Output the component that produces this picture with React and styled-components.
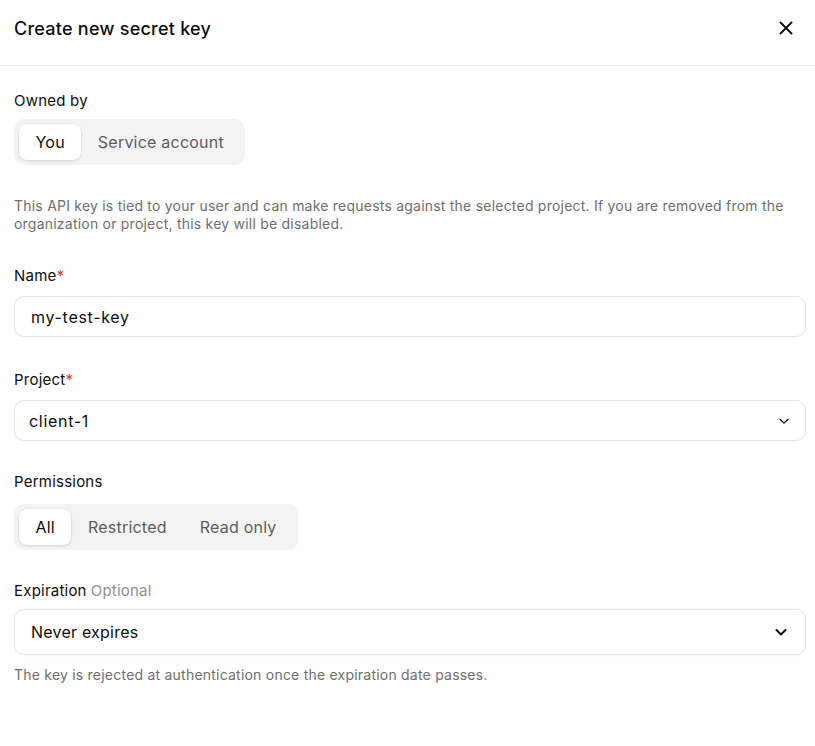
import React from "react";
import styled, { createGlobalStyle } from "styled-components";

const Global = createGlobalStyle`
  body {
    margin: 0;
    background: #fff;
    font-family: Inter, "Noto Sans", sans-serif;
    color: #0d0d0d;
    letter-spacing: 0.22px;
  }
`;

const Dialog = styled.div`
  width: 815px;
  display: flex;
  flex-direction: column;
`;

const Header = styled.div`
  height: 66px;
  box-sizing: border-box;
  display: flex;
  align-items: center;
  justify-content: space-between;
  padding: 0 20px 9px 14px;
  border-bottom: 1px solid #e6e6e6;
`;

const Title = styled.h2`
  margin: 0;
  font-size: 18px;
  font-weight: 500;
  letter-spacing: 0.25px;
`;

const CloseButton = styled.button`
  border: 0;
  background: none;
  padding: 0;
  display: flex;
  cursor: pointer;
  color: #0d0d0d;
`;

const Body = styled.div`
  padding: 25px 9px 0 14px;
  display: flex;
  flex-direction: column;
`;

const Field = styled.div`
  display: flex;
  flex-direction: column;
  margin-top: ${(p) => p.$mt || 0}px;
  margin-bottom: ${(p) => p.$mb || 0}px;
`;

const Label = styled.div`
  font-size: 15px;
  line-height: 20px;
  margin-bottom: ${(p) => p.$gap || 10}px;
`;

const Required = styled.span`
  color: #e02e2a;
`;

const Muted = styled.span`
  color: #8f8f8f;
  margin-left: 4px;
`;

const Segmented = styled.div`
  display: inline-flex;
  align-self: flex-start;
  background: #f3f3f3;
  border-radius: 10px;
  padding: 5px;
  height: 46px;
  box-sizing: border-box;
`;

const Segment = styled.button`
  border: 0;
  font-family: inherit;
  letter-spacing: inherit;
  font-size: 16px;
  padding: 0 16.5px;
  height: 36px;
  border-radius: 8px;
  cursor: pointer;
  background: ${(p) => (p.$active ? "#fff" : "transparent")};
  color: ${(p) => (p.$active ? "#0d0d0d" : "#5d5d5d")};
  box-shadow: ${(p) =>
    p.$active ? "0 1px 3px rgba(0,0,0,0.12), 0 0 0 0.5px rgba(0,0,0,0.04)" : "none"};
`;

const Help = styled.p`
  margin: ${(p) => p.$mt || 0}px 0 0;
  font-size: 14px;
  line-height: 18px;
  color: #6e6e6e;
`;

const Box = styled.div`
  height: ${(p) => p.$h || 41}px;
  box-sizing: border-box;
  border: 1px solid #e3e3e3;
  border-radius: 10px;
  display: flex;
  align-items: center;
  justify-content: space-between;
  padding: 0 ${(p) => p.$pr || 14}px 0 ${(p) => p.$pl || 14}px;
  font-size: 16px;
  box-shadow: 0 1px 2px rgba(0, 0, 0, 0.03);
`;

const Value = styled.span`
  letter-spacing: ${(p) => (p.$spaced ? "0.7px" : "inherit")};
`;

const Chevron = ({ size = 14, weight = 1.6 }) => (
  <svg width={size} height={size} viewBox="0 0 16 16" fill="none">
    <path d="M3.5 6l4.5 4.5L12.5 6" stroke="#0d0d0d" strokeWidth={weight} strokeLinecap="round" strokeLinejoin="round" />
  </svg>
);

export default function App() {
  return (
    <>
      <Global />
      <Dialog>
        <Header>
          <Title>Create new secret key</Title>
          <CloseButton aria-label="Close">
            <svg width="18" height="18" viewBox="0 0 18 18" fill="none">
              <path d="M3.5 3.5l11 11M14.5 3.5l-11 11" stroke="#0d0d0d" strokeWidth="1.9" strokeLinecap="round" />
            </svg>
          </CloseButton>
        </Header>
        <Body>
          <Field>
            <Label $gap={8}>Owned by</Label>
            <Segmented>
              <Segment $active>You</Segment>
              <Segment>Service account</Segment>
            </Segmented>
          </Field>
          <Help $mt={32}>
            This API key is tied to your user and can make requests against the selected project. If you are removed from the organization or project, this key will be disabled.
          </Help>

          <Field $mt={33} $mb={33}>
            <Label>
              Name<Required>*</Required>
            </Label>
            <Box $pl={16}>
              <Value $spaced>my-test-key</Value>
            </Box>
          </Field>

          <Field $mb={31}>
            <Label>
              Project<Required>*</Required>
            </Label>
            <Box $pr={14}>
              <Value $spaced>client-1</Value>
              <Chevron size={14} weight={1.4} />
            </Box>
          </Field>

          <Field $mb={31}>
            <Label $gap={12}>Permissions</Label>
            <Segmented>
              <Segment $active>All</Segment>
              <Segment>Restricted</Segment>
              <Segment>Read only</Segment>
            </Segmented>
          </Field>

          <Field>
            <Label $gap={8}>
              Expiration<Muted>Optional</Muted>
            </Label>
            <Box $h={46} $pl={16} $pr={16}>
              <Value>Never expires</Value>
              <Chevron size={16} weight={2} />
            </Box>
          </Field>
          <Help $mt={11}>The key is rejected at authentication once the expiration date passes.</Help>
        </Body>
      </Dialog>
    </>
  );
}
